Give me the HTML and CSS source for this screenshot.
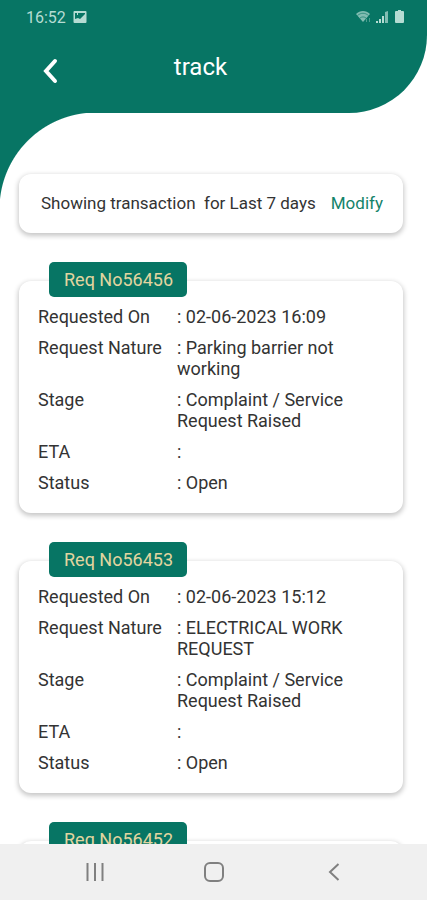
FILE: index.html
```html
<!DOCTYPE html>
<html lang="en">
  <head>
    <meta charset="UTF-8" />
    <meta name="viewport" content="width=device-width, initial-scale=1.0" />
    <title>track</title>
    <link rel="stylesheet" href="styles.css">
  </head>
  <body>
    <header class="header">
      <div class="statusbar">
        <span class="time">16:52</span>
        <svg class="picture" width="14" height="14" viewBox="0 0 14 14">
          <path fill="currentColor" fill-rule="evenodd" d="M1.500 1h11a1 1 0 0 1 1 1v10a1 1 0 0 1-1 1h-11a1 1 0 0 1-1-1V2a1 1 0 0 1 1-1zM2 3v2h2V3zM5 3v2H2v4l3-1 2 1 5-5V3z" />
        </svg>
        <div class="signals">
          <svg width="17" height="14" viewBox="0 0 17 14">
            <path fill="currentColor" opacity=".7" d="M0 4C4 0 10 0 14 4L7 12z" />
            <path fill="none" stroke="#077564" opacity=".6" d="M1.500 5.500c3.500-3 7.500-3 11 0M4 8c2-1.500 4-1.500 6 0" />
            <path fill="none" stroke="currentColor" opacity=".4" d="M10.500 9v3M13.500 12V8" />
          </svg>
          <svg width="13" height="14" viewBox="0 0 13 14">
            <path fill="currentColor" d="M0 11h2v2H0zM3 9h2v4H3zM6 6h2v7H6z" />
            <path fill="currentColor" opacity=".7" d="M9 2l3-1v12H9z" />
          </svg>
          <svg class="battery" width="9" height="14" viewBox="0 0 9 14">
            <path fill="currentColor" d="M3 0h3v1h2a1 1 0 0 1 1 1v10a1 1 0 0 1-1 1H1a1 1 0 0 1-1-1V2a1 1 0 0 1 1-1h2z" />
          </svg>
        </div>
      </div>
      <div class="titlebar">
        <button class="back" aria-label="Back">
          <svg width="18" height="26" viewBox="0 0 18 26">
            <path d="M15 3L6 13l9 10" fill="none" stroke="currentColor" stroke-width="4" stroke-linecap="round" />
          </svg>
        </button>
        <h1>track</h1>
      </div>
    </header>

    <main class="content">
      <section class="card filter">
        <span>Showing transaction&nbsp; for Last 7 days</span>
        <a href="#modify">Modify</a>
      </section>

      <article class="card request">
        <h2 class="tag">Req No56456</h2>
        <dl>
          <dt>Requested On</dt>
          <dd>: 02-06-2023 16:09</dd>
          <dt>Request Nature</dt>
          <dd>: Parking barrier not working</dd>
          <dt>Stage</dt>
          <dd>: Complaint / Service Request Raised</dd>
          <dt>ETA</dt>
          <dd>:</dd>
          <dt>Status</dt>
          <dd>: Open</dd>
        </dl>
      </article>

      <article class="card request">
        <h2 class="tag">Req No56453</h2>
        <dl>
          <dt>Requested On</dt>
          <dd>: 02-06-2023 15:12</dd>
          <dt>Request Nature</dt>
          <dd>: ELECTRICAL WORK REQUEST</dd>
          <dt>Stage</dt>
          <dd>: Complaint / Service Request Raised</dd>
          <dt>ETA</dt>
          <dd>:</dd>
          <dt>Status</dt>
          <dd>: Open</dd>
        </dl>
      </article>

      <article class="card request">
        <h2 class="tag">Req No56452</h2>
      </article>
    </main>

    <nav class="navbar">
      <button aria-label="Recent apps">
        <svg width="24" height="24" viewBox="0 0 24 24">
          <path d="M4.500 3v18M12 3v18M19.500 3v18" />
        </svg>
      </button>
      <button aria-label="Home">
        <svg width="24" height="24" viewBox="0 0 24 24">
          <rect x="3" y="3" width="18" height="18" rx="5" />
        </svg>
      </button>
      <button aria-label="Back">
        <svg width="24" height="24" viewBox="0 0 24 24">
          <path d="M16.500 4L8 12l8.500 8" />
        </svg>
      </button>
    </nav>
  </body>
</html>
```

FILE: styles.css
```css
* {
  margin: 0;
  padding: 0;
  box-sizing: border-box;
}
body {
  display: flex;
  flex-direction: column;
  height: 100vh;
  background-color: white;
  color: #333;
  font-family: Roboto, "Liberation Sans", sans-serif;
  font-size: 18px;
  line-height: 21px;
}
button {
  border: none;
  background: none;
  cursor: pointer;
}
svg {
  display: block;
}
.header {
  background-color: #077564;
  color: white;
  border-bottom-right-radius: 78px;
  padding-bottom: 26px;
}
.statusbar {
  display: flex;
  align-items: center;
  height: 34px;
  padding: 0 23px 0 26px;
  font-size: 16px;
  color: #b5dcd3;
}
.picture {
  margin-left: 7px;
}
.signals {
  display: flex;
  gap: 3px;
  margin-left: auto;
}
.battery {
  margin-left: 3px;
}
.titlebar {
  display: grid;
  grid-template-columns: 60px 1fr 60px;
  align-items: center;
  height: 53px;
  padding: 0 13px;
}
.back {
  justify-self: center;
  padding: 20px 0 0 12px;
  color: white;
}
.titlebar h1 {
  font-size: 24px;
  font-weight: normal;
  line-height: 28px;
  text-align: center;
  padding: 12px 26px 0 0;
}
.content {
  position: relative;
  flex: 1;
  min-height: 0;
  overflow-y: auto;
  scrollbar-width: none;
  padding: 61px 24px 0 19px;
}
/* green piece that curves down the left side under the header */
.content::before {
  content: "";
  position: absolute;
  top: 0;
  left: 0;
  width: 96px;
  height: 96px;
  background: radial-gradient(circle at 100% 100%, transparent 96px, #077564 97px);
}
.card {
  position: relative;
  margin-bottom: 48px;
  background-color: white;
  border-radius: 12px;
  box-shadow: 0 2px 5px 1px rgba(0, 0, 0, 0.22);
}
.filter {
  display: flex;
  align-items: center;
  justify-content: space-between;
  height: 59px;
  padding: 0 20px 0 22px;
  font-size: 17px;
}
.filter a {
  color: #14836a;
  text-decoration: none;
}
.request {
  min-height: 232px;
  padding: 25px 19px 20px;
}
.tag {
  position: absolute;
  top: -19px;
  left: 30px;
  padding: 7px 14px 7px 15px;
  border-radius: 5px;
  background-color: #077564;
  color: #e3d5a0;
  font-size: 18px;
  font-weight: normal;
  line-height: 21px;
}
dl {
  display: grid;
  grid-template-columns: 139px 1fr;
  row-gap: 10px;
}
.navbar {
  display: flex;
  align-items: center;
  justify-content: space-around;
  height: 56px;
  padding: 0 33px 0 35px;
  background-color: #f0f0f0;
}
.navbar button {
  color: #808080;
}
.navbar svg {
  fill: none;
  stroke: currentColor;
  stroke-width: 2;
}
```
